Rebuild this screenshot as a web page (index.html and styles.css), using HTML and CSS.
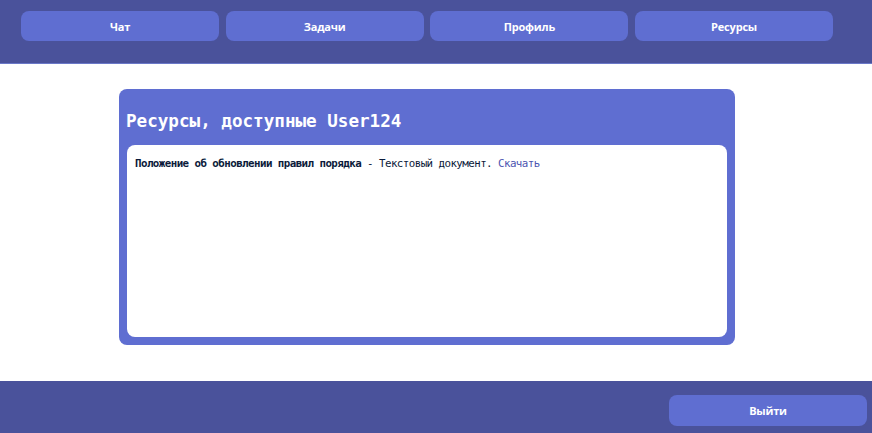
FILE: index.html
```html
<!DOCTYPE html>
<html lang="ru">
<head>
<meta charset="utf-8">
<title>Ресурсы</title>
<link rel="stylesheet" href="styles.css">
</head>
<body>
<header class="topbar">
  <nav class="nav">
    <a class="nav-btn" href="#">Чат</a>
    <a class="nav-btn" href="#">Задачи</a>
    <a class="nav-btn" href="#">Профиль</a>
    <a class="nav-btn" href="#">Ресурсы</a>
  </nav>
</header>
<main class="main">
  <section class="card">
    <h2 class="card-title">Ресурсы, доступные User124</h2>
    <div class="card-body">
      <p class="resource"><b class="res-name">Положение об обновлении правил порядка</b> - Текстовый документ. <a class="res-link" href="#">Скачать</a></p>
    </div>
  </section>
</main>
<footer class="bottombar">
  <a class="nav-btn exit-btn" href="#">Выйти</a>
</footer>
</body>
</html>
```

FILE: styles.css
```css
html, body {
  margin: 0;
  padding: 0;
  background: #ffffff;
}

body {
  width: 872px;
  height: 433px;
  display: flex;
  flex-direction: column;
  overflow: hidden;
}

.topbar {
  height: 63px;
  background: #4a529b;
  border-bottom: 1px solid #6a78c8;
  box-sizing: content-box;
}

.nav {
  display: flex;
  gap: 6.7px;
  padding: 11px 0 0 21px;
}

.nav-btn {
  display: flex;
  align-items: center;
  justify-content: center;
  width: 198px;
  height: 30px;
  background: #5f6ed1;
  border-radius: 8px;
  color: #ffffff;
  text-decoration: none;
  font-family: "Open Sans", "Noto Sans", sans-serif;
  font-weight: 700;
  font-size: 11px;
  letter-spacing: -0.2px;
}

.main {
  flex: 1;
  padding: 25px 0 0 119px;
}

.card {
  width: 600px;
  height: 240px;
  padding: 8px;
  background: #5f6ed1;
  border-radius: 8px;
  display: flex;
  flex-direction: column;
}

.card-title {
  margin: 12px 0 0 -1px;
  height: 36px;
  color: #ffffff;
  font-family: "DejaVu Sans Mono", monospace;
  font-weight: 700;
  font-size: 17.6px;
  line-height: 24px;
}

.card-body {
  flex: 1;
  background: #ffffff;
  border-radius: 8px;
  padding: 11px 8px 9px;
}

.resource {
  margin: 0;
  font-family: "DejaVu Sans Mono", monospace;
  font-size: 10.8px;
  letter-spacing: -0.55px;
  line-height: 15px;
  color: #0b1a3a;
}

.res-name {
  font-weight: 700;
}

.res-link {
  color: #4b55b0;
  text-decoration: none;
}

.bottombar {
  height: 52px;
  background: #4a529b;
  display: flex;
  justify-content: flex-end;
  align-items: flex-start;
  padding: 14px 5px 0 0;
  box-sizing: border-box;
}

.exit-btn {
  height: 31px;
}
```
